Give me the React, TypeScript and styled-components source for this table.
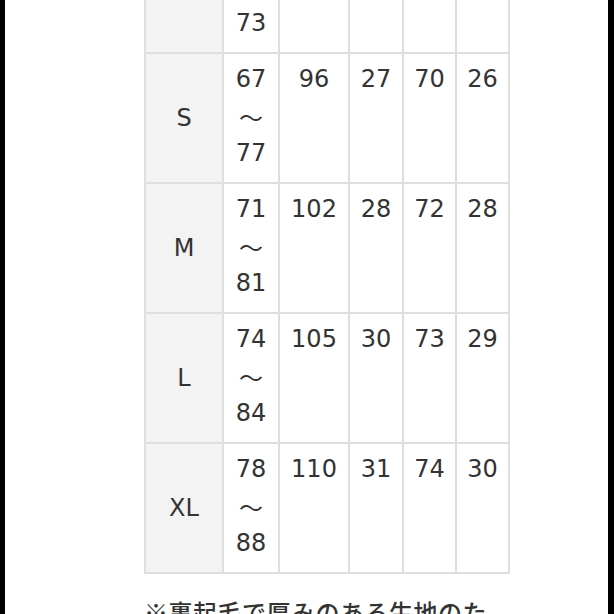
import styled, { createGlobalStyle } from "styled-components";

const GlobalStyle = createGlobalStyle`
  html, body {
    margin: 0;
    padding: 0;
    background: #000;
  }
  body {
    font-family: "DejaVu Sans", "Noto Sans CJK JP", sans-serif;
  }
`;

const Screen = styled.main`
  margin: 0 6px 0 5px;
  height: 614px;
  background: #fff;
  overflow: hidden;
`;

// the page is scrolled: the top of the table is out of view
const Scroller = styled.div`
  margin-top: -78px;
  padding-left: 139px;
`;

const SizeGrid = styled.div`
  display: grid;
  grid-template-columns: 76px 54px 68px 52px 51px 51px;
  grid-auto-rows: 128px;
  gap: 2px;
  padding: 2px;
  width: max-content;
  background: #dedede;
`;

const Cell = styled.div<{ $head?: boolean }>`
  background: ${(p) => (p.$head ? "#f3f3f3" : "#fff")};
  color: #333;
  font-size: 24px;
  line-height: 37px;
  text-align: center;
  padding-top: ${(p) => (p.$head ? "0" : "7px")};
  display: ${(p) => (p.$head ? "flex" : "block")};
  align-items: center;
  justify-content: center;
`;

const Line = styled.div`
  white-space: nowrap;
`;

const Wave = styled(Line)`
  font-family: "Noto Sans CJK JP", sans-serif;
`;

const Note = styled.p`
  margin: 20px 0 0 0;
  width: 355px;
  color: #333;
  font-family: "Noto Sans CJK JP", sans-serif;
  font-weight: 500;
  font-size: 24px;
  line-height: 36px;
  letter-spacing: 0.5px;
`;

type Row = {
  size: string;
  waist: [string, string];
  rest: string[];
};

const rows: Row[] = [
  { size: "XS", waist: ["63", "73"], rest: ["90", "26", "68", "25"] },
  { size: "S", waist: ["67", "77"], rest: ["96", "27", "70", "26"] },
  { size: "M", waist: ["71", "81"], rest: ["102", "28", "72", "28"] },
  { size: "L", waist: ["74", "84"], rest: ["105", "30", "73", "29"] },
  { size: "XL", waist: ["78", "88"], rest: ["110", "31", "74", "30"] },
];

export default function App() {
  return (
    <Screen>
      <GlobalStyle />
      <Scroller>
        <SizeGrid>
          {rows.map((r) => [
            <Cell $head key={r.size + "-h"}>
              {r.size}
            </Cell>,
            <Cell key={r.size + "-w"}>
              <Line>{r.waist[0]}</Line>
              <Wave>～</Wave>
              <Line>{r.waist[1]}</Line>
            </Cell>,
            ...r.rest.map((v, i) => (
              <Cell key={r.size + "-" + i}>
                <Line>{v}</Line>
              </Cell>
            )),
          ])}
        </SizeGrid>
        <Note>※裏起毛で厚みのある生地のため、通常よりゆったりとしたサイズ感です。</Note>
      </Scroller>
    </Screen>
  );
}
